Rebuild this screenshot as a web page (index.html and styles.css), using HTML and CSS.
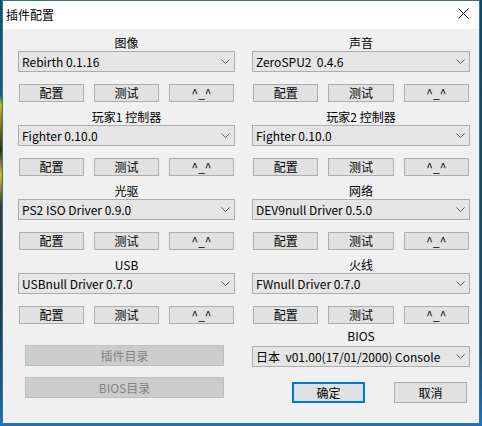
FILE: index.html
```html
<!DOCTYPE html>
<html lang="zh-CN">
<head>
<meta charset="utf-8">
<title>插件配置</title>
<link rel="stylesheet" href="styles.css">
</head>
<body>
<div class="window">
  <div class="titlebar">
    <span class="title">插件配置</span>
    <svg class="close" width="11" height="11" viewBox="0 0 11 11"><path d="M0.5 0.5 L10.5 10.5 M10.5 0.5 L0.5 10.5" stroke="#000" stroke-width="1" fill="none"/></svg>
  </div>
  <div class="content">
    <div class="col">
      <div class="group">
        <div class="label">图像</div>
        <div class="combo"><span class="val">Rebirth 0.1.16</span><svg class="chev" width="9" height="5" viewBox="0 0 9 5"><path d="M0.5 0.5 L4.5 4.5 L8.5 0.5" stroke="#606060" fill="none"/></svg></div>
        <div class="btns"><div class="btn">配置</div><div class="btn">测试</div><div class="btn">^_^</div></div>
      </div>
      <div class="group">
        <div class="label">玩家1 控制器</div>
        <div class="combo"><span class="val">Fighter 0.10.0</span><svg class="chev" width="9" height="5" viewBox="0 0 9 5"><path d="M0.5 0.5 L4.5 4.5 L8.5 0.5" stroke="#606060" fill="none"/></svg></div>
        <div class="btns"><div class="btn">配置</div><div class="btn">测试</div><div class="btn">^_^</div></div>
      </div>
      <div class="group">
        <div class="label">光驱</div>
        <div class="combo"><span class="val">PS2 ISO Driver 0.9.0</span><svg class="chev" width="9" height="5" viewBox="0 0 9 5"><path d="M0.5 0.5 L4.5 4.5 L8.5 0.5" stroke="#606060" fill="none"/></svg></div>
        <div class="btns"><div class="btn">配置</div><div class="btn">测试</div><div class="btn">^_^</div></div>
      </div>
      <div class="group">
        <div class="label">USB</div>
        <div class="combo"><span class="val">USBnull Driver 0.7.0</span><svg class="chev" width="9" height="5" viewBox="0 0 9 5"><path d="M0.5 0.5 L4.5 4.5 L8.5 0.5" stroke="#606060" fill="none"/></svg></div>
        <div class="btns"><div class="btn">配置</div><div class="btn">测试</div><div class="btn">^_^</div></div>
      </div>
      <div class="dirbtn first">插件目录</div>
      <div class="dirbtn">BIOS目录</div>
    </div>
    <div class="col">
      <div class="group">
        <div class="label">声音</div>
        <div class="combo"><span class="val">ZeroSPU2  0.4.6</span><svg class="chev" width="9" height="5" viewBox="0 0 9 5"><path d="M0.5 0.5 L4.5 4.5 L8.5 0.5" stroke="#606060" fill="none"/></svg></div>
        <div class="btns"><div class="btn">配置</div><div class="btn">测试</div><div class="btn">^_^</div></div>
      </div>
      <div class="group">
        <div class="label">玩家2 控制器</div>
        <div class="combo"><span class="val">Fighter 0.10.0</span><svg class="chev" width="9" height="5" viewBox="0 0 9 5"><path d="M0.5 0.5 L4.5 4.5 L8.5 0.5" stroke="#606060" fill="none"/></svg></div>
        <div class="btns"><div class="btn">配置</div><div class="btn">测试</div><div class="btn">^_^</div></div>
      </div>
      <div class="group">
        <div class="label">网络</div>
        <div class="combo"><span class="val">DEV9null Driver 0.5.0</span><svg class="chev" width="9" height="5" viewBox="0 0 9 5"><path d="M0.5 0.5 L4.5 4.5 L8.5 0.5" stroke="#606060" fill="none"/></svg></div>
        <div class="btns"><div class="btn">配置</div><div class="btn">测试</div><div class="btn">^_^</div></div>
      </div>
      <div class="group">
        <div class="label">火线</div>
        <div class="combo"><span class="val">FWnull Driver 0.7.0</span><svg class="chev" width="9" height="5" viewBox="0 0 9 5"><path d="M0.5 0.5 L4.5 4.5 L8.5 0.5" stroke="#606060" fill="none"/></svg></div>
        <div class="btns"><div class="btn">配置</div><div class="btn">测试</div><div class="btn">^_^</div></div>
      </div>
      <div class="label bios">BIOS</div>
      <div class="combo"><span class="val">日本  v01.00(17/01/2000) Console</span><svg class="chev" width="9" height="5" viewBox="0 0 9 5"><path d="M0.5 0.5 L4.5 4.5 L8.5 0.5" stroke="#606060" fill="none"/></svg></div>
      <div class="actions"><div class="btn act default">确定</div><div class="btn act">取消</div></div>
    </div>
  </div>
</div>
</body>
</html>
```
FILE: styles.css
```css
html, body {
  margin: 0;
  padding: 0;
}
body {
  width: 482px;
  height: 426px;
  overflow: hidden;
  background:
    linear-gradient(to bottom, #0d4f6e 0px, #1b5c74 95px, #c9b51f 105px, #2c2a14 150px, #d0bd2a 175px, #3a3a30 205px, #1a3a4a 300px, #1d5f8f 400px, #1b74c4 426px) left top / 2px 426px no-repeat,
    linear-gradient(to bottom, #0e4b66 0px, #184b5c 200px, #1d4f73 350px, #1b74c4 426px);
  font-family: "Noto Sans CJK SC", "Noto Sans", sans-serif;
  font-size: 12px;
  color: #000;
}
.window {
  margin-left: 2px;
  width: 476px;
  height: 422px;
  border: 1px solid #3a6f9a;
  background: #f0f0f0;
  display: flex;
  flex-direction: column;
}
.titlebar {
  height: 27px;
  background: #fff;
  display: flex;
  align-items: center;
  justify-content: space-between;
  padding: 0 10px 1px 3px;
}
.title {
  font-size: 12px;
  line-height: 14px;
}
.close {
  display: block;
  margin-bottom: 3px;
}
.content {
  display: flex;
  gap: 17px;
  padding: 7px 9px 0 15px;
}
.col {
  display: flex;
  flex-direction: column;
  width: 217px;
}
.col + .col {
  width: 218px;
}
.group {
  display: flex;
  flex-direction: column;
  margin-bottom: 8px;
}
.group:nth-child(4) {
  margin-bottom: 0;
}
.label {
  height: 14px;
  line-height: 14px;
  text-align: center;
  white-space: pre;
}
.combo {
  margin-top: 1px;
  height: 19px;
  border: 1px solid #adadad;
  background: #e5e5e5;
  display: flex;
  align-items: center;
  justify-content: space-between;
  padding: 0 4px 0 3px;
}
.val {
  line-height: 19px;
  white-space: pre;
}
.chev {
  display: block;
}
.btns {
  margin-top: 12px;
  display: grid;
  grid-template-columns: repeat(3, 1fr);
  gap: 10px;
  padding: 0 1px;
}
.btn {
  height: 16px;
  border: 1px solid #adadad;
  background: #e1e1e1;
  text-align: center;
  line-height: 16px;
}
.dirbtn {
  margin: 11px 11px 0 7px;
  height: 19px;
  line-height: 19px;
  border: 1px solid #bfbfbf;
  background: #cccccc;
  color: #838383;
  text-align: center;
}
.dirbtn.first {
  margin-top: 21px;
}
.label.bios {
  margin-top: 5px;
}
.col + .col > .combo {
  margin-top: 3px;
}
.actions {
  margin-top: 15px;
  display: flex;
  justify-content: flex-end;
  gap: 29px;
  padding-right: 3px;
}
.btn.act {
  width: 71px;
  height: 19px;
  line-height: 19px;
}
.btn.act.default {
  width: 69px;
  height: 17px;
  line-height: 17px;
  border: 2px solid #0078d7;
}
```
